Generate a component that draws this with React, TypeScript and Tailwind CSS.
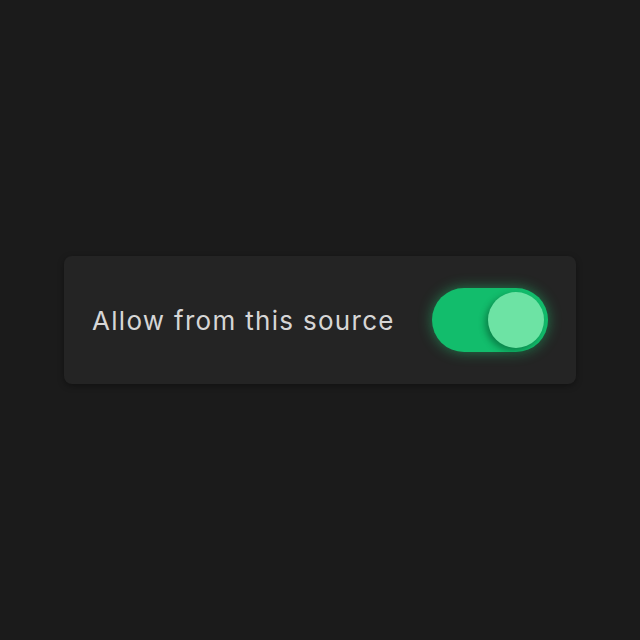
import React, { useState } from 'react';

export default function App() {
  const [allowed, setAllowed] = useState(true);

  return (
    <div className="min-h-screen w-full bg-[#1b1b1b] flex items-center justify-center" style={{ fontFamily: 'Inter, "Noto Sans", sans-serif' }}>
      <div className="w-[512px] h-[128px] rounded-lg bg-[#242424] flex items-center justify-between pl-7 pr-7 shadow-[0_2px_6px_rgba(0,0,0,0.35)]">
        <span className="text-[26px] text-[#d6d6d6] tracking-[1.3px]">Allow from this source</span>
        <button
          type="button"
          onClick={() => setAllowed(!allowed)}
          className={`w-[116px] h-[64px] rounded-full p-1 flex items-center ${
            allowed
              ? 'bg-[#12bd6c] justify-end shadow-[0_0_14px_rgba(34,230,130,0.45)]'
              : 'bg-[#3a3a3a] justify-start'
          }`}
        >
          <span className="w-[56px] h-[56px] rounded-full bg-[#6de3a4] shadow-[-3px_3px_6px_rgba(0,60,30,0.45)]" />
        </button>
      </div>
    </div>
  );
}
